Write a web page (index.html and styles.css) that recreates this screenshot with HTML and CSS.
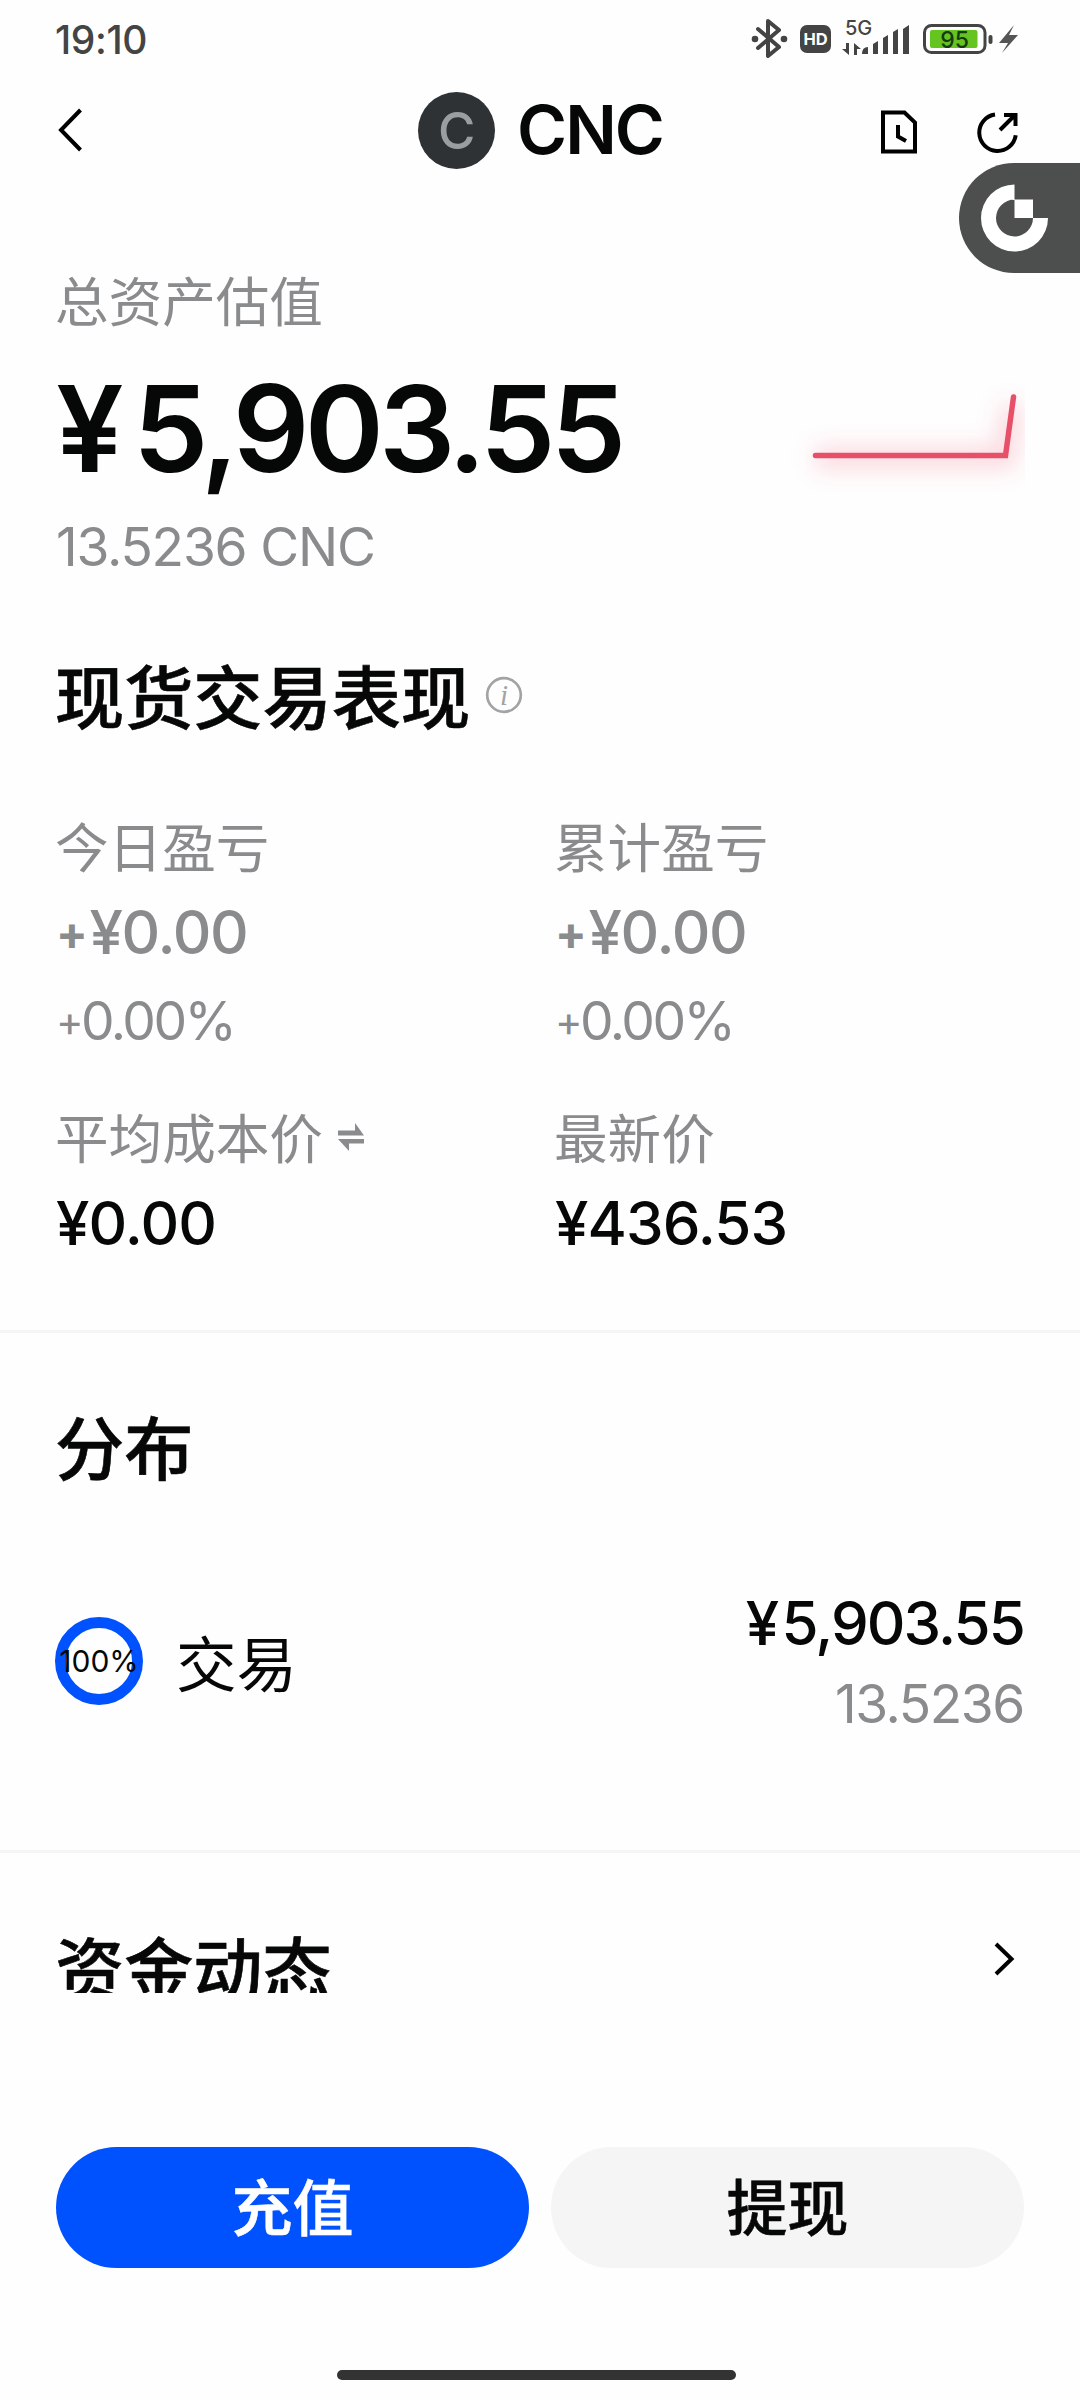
FILE: index.html
```
<!DOCTYPE html>
<html lang="zh-CN">
<head>
<meta charset="utf-8">
<title>CNC</title>
<link rel="stylesheet" href="styles.css">
</head>
<body>
<div class="screen">
  <div class="statusbar">
    <span class="clock">19:10</span>
    <div class="status-icons">
      <svg class="status-svg" viewBox="0 0 270 44" width="270" height="44" fill="none">
        <g stroke="#444" stroke-width="4" stroke-linecap="round" stroke-linejoin="round">
          <path d="M7 14 L28 32 L17 41 V6 L28 15 L7 33"/>
        </g>
        <circle cx="4" cy="24" r="3.3" fill="#444"/><circle cx="33" cy="24" r="3.3" fill="#444"/>
        <rect x="49" y="10" width="31" height="28" rx="7" fill="#444"/>
        <text class="hd" x="64.500" y="30" text-anchor="middle">HD</text>
        <text class="net" x="94" y="20">5G</text>
        <g fill="#444">
          <path d="M98 28h-3v6h-4l7 6zM103 40V28l7 6h-4v6z"/>
          <path d="M111 39q0-7 6-7v7zM122 29l5-3v13h-5zM132 23l5-3v19h-5zM142 17l5-3v25h-5zM152 14l6-4v29h-6z"/>
        </g>
        <rect x="173.500" y="10.500" width="60.500" height="27" rx="7" stroke="#444" stroke-width="3"/>
        <rect x="179" y="15" width="47.500" height="18" rx="2" fill="#66c421"/>
        <text class="bat" x="203.500" y="32.500" text-anchor="middle">95</text>
        <rect x="237.500" y="20" width="4" height="9" rx="2" fill="#444"/>
        <path d="M263 10l-15 18h9l-6 10 16-18h-9z" fill="#555"/>
      </svg>
    </div>
  </div>

  <header class="header">
    <svg class="back" viewBox="0 0 26 44" width="26" height="44" fill="none" stroke="#000" stroke-width="4"><path d="M23.500 2 4 22l19.500 20"/></svg>
    <div class="coin"><span class="coin-logo">C</span><h1 class="coin-name">CNC</h1></div>
    <div class="actions">
      <svg viewBox="0 0 36 44" width="36" height="44" fill="none" stroke="#000" stroke-width="4"><path d="M2 2.500H23.500L34 12.500V41.500H2z"/><path d="M17 15v11.500l8 4.500"/></svg>
      <svg viewBox="0 0 42 44" width="42" height="44" fill="none" stroke="#000" stroke-width="4"><path d="M18 4.500a18.300 18.300 0 1 0 20.700 20.700"/><path d="M23 20 37.500 5.500M27 5h11.500v11"/></svg>
    </div>
  </header>

  <div class="float-tab">
    <svg viewBox="0 0 68 68" width="68" height="68" fill="#fff"><path d="M33.500 0.500A33.500 33.500 0 1 0 67 34H52A18.500 18.500 0 1 1 33.500 15.500zM33.500 15.500H52V34H33.500z"/></svg>
  </div>

  <main class="content">
    <section class="asset">
      <div class="asset-text">
        <p class="label">总资产估值</p>
        <p class="total"><span class="yen">¥</span>5,903.55</p>
        <p class="holding">13.5236 CNC</p>
      </div>
      <svg class="spark" viewBox="0 0 245 130" width="245" height="130" fill="none">
        <defs><filter id="glow" x="-30" y="-30" width="300" height="190" filterUnits="userSpaceOnUse"><feGaussianBlur stdDeviation="11"/></filter></defs>
        <path d="M35 78H225L233 25" stroke="#f0506c" stroke-opacity=".22" stroke-width="22" filter="url(#glow)"/>
        <path d="M35.500 75.500H225.500L233.500 17" stroke="#e84f68" stroke-width="5.500" stroke-linecap="round"/>
      </svg>
    </section>

    <section class="performance">
      <div class="title-row">
        <h2 class="title">现货交易表现</h2>
        <svg class="info" viewBox="0 0 38 38" width="38" height="38" fill="none"><circle cx="19" cy="19" r="16.800" stroke="#a1a3a5" stroke-width="2.700"/><text class="info-i" x="19" y="28.500" text-anchor="middle">i</text></svg>
      </div>
      <div class="stats">
        <div class="stat"><p class="label">今日盈亏</p><p class="value signed"><span class="plus">+</span>¥0.00</p><p class="pct"><span class="plus">+</span>0.00%</p></div>
        <div class="stat"><p class="label">累计盈亏</p><p class="value signed"><span class="plus">+</span>¥0.00</p><p class="pct"><span class="plus">+</span>0.00%</p></div>
        <div class="stat"><p class="label">平均成本价<svg class="swap" viewBox="0 0 26 28" width="26" height="28" fill="#898b8d"><path d="M0 7.500h17V0l9 12.500H0zM26 20.500H11V28L0 16h26z"/></svg></p><p class="value">¥0.00</p></div>
        <div class="stat"><p class="label">最新价</p><p class="value">¥436.53</p></div>
      </div>
    </section>

    <section class="distribution">
      <h2 class="title">分布</h2>
      <div class="dist-row">
        <div class="ring"><span>100%</span></div>
        <span class="dist-name">交易</span>
        <div class="dist-amount"><p class="value"><span class="yen">¥</span>5,903.55</p><p class="sub">13.5236</p></div>
      </div>
    </section>

    <section class="activity">
      <h2 class="title">资金动态</h2>
      <svg class="more" viewBox="0 0 22 36" width="22" height="36" fill="none" stroke="#000" stroke-width="4"><path d="M2 3l15.500 15L2 33"/></svg>
    </section>
  </main>

  <footer class="footer">
    <button class="btn primary">充值</button>
    <button class="btn secondary">提现</button>
  </footer>
  <div class="home-bar"></div>
</div>
</body>
</html>
```
FILE: styles.css
```
* { box-sizing: border-box; }
body, h1, h2, p { margin: 0; }
body {
  width: 1080px;
  height: 2400px;
  overflow: hidden;
  background: #fefefe;
  color: #060807;
  font-family: Inter, "Noto Sans CJK SC", sans-serif;
}
.screen {
  position: relative;
  display: flex;
  flex-direction: column;
  height: 2400px;
}
.statusbar {
  display: flex;
  justify-content: space-between;
  height: 78px;
  padding: 15px 56px 0 55px;
}
.clock {
  font-size: 39px;
  line-height: 50px;
  font-weight: 500;
  letter-spacing: -0.400px;
  color: #444;
}
.status-icons { width: 273px; }
.status-svg { display: block; }
.hd { font: 700 16.500px Inter, sans-serif; fill: #fff; }
.net { font: 500 20px Inter, sans-serif; fill: #444; }
.bat { font: 500 23px Inter, sans-serif; fill: #173a10; }
.header {
  display: grid;
  grid-template-columns: 1fr auto 1fr;
  align-items: center;
  height: 104px;
  padding: 0 61px 0 62px;
}
.back { margin-left: -5px; }
.coin { display: flex; align-items: center; gap: 22px; }
.coin-logo {
  width: 77px;
  height: 77px;
  border-radius: 50%;
  background: #2f3235;
  color: #9b9ea1;
  font-size: 51px;
  line-height: 77px;
  font-weight: 500;
  text-align: center;
}
.coin-name {
  font-size: 68px;
  line-height: 78px;
  padding-bottom: 2px;
  font-weight: 600;
  letter-spacing: -2px;
}
.actions { display: flex; justify-content: flex-end; gap: 60px; padding-top: 3px; }
.float-tab {
  position: absolute;
  top: 163px;
  right: 0;
  width: 121px;
  height: 110px;
  padding: 21px 0 0 22px;
  border-radius: 55px 0 0 55px;
  background: #4d4f4e;
}
.content {
  height: 1811px;
  overflow: hidden;
}
.asset {
  display: flex;
  justify-content: space-between;
  padding: 85px 56px 0;
}
.label {
  display: flex;
  align-items: center;
  margin-left: -1px;
  padding-top: 1px;
  font-size: 53.600px;
  line-height: 69px;
  color: #898b8d;
}
.total {
  margin-top: 22px;
  font-size: 120px;
  line-height: 140px;
  font-weight: 600;
  letter-spacing: -4.900px;
}
.yen { margin-right: 0.120em; }
.holding {
  margin-top: 13px;
  font-size: 53.300px;
  line-height: 70px;
  letter-spacing: -1.200px;
  color: #898b8d;
}
.spark { margin: 113px -1px 0 0; }
.performance { padding: 72px 56px 0; border-bottom: 3px solid #f5f5f5; height: 751px; }
.title {
  margin-left: -1px;
  padding-top: 1px;
  font-size: 69.200px;
  line-height: 89px;
  font-weight: 500;
  -webkit-text-stroke: 0.600px #060807;
}
.title-row { display: flex; align-items: center; gap: 15px; }
.info { margin-bottom: 9px; }
.info-i { font: italic 29px "Liberation Serif", serif; fill: #a1a3a5; }
.stats { display: grid; grid-template-columns: 499px 1fr; margin-top: 69px; row-gap: 48px; }
.value {
  margin-top: 9px;
  font-size: 60px;
  line-height: 80px;
  font-weight: 500;
  letter-spacing: -0.900px;
}
.signed { letter-spacing: -1.300px; color: #898b8d; }
.plus { font-size: 0.780em; line-height: 0; vertical-align: 0.090em; }
.signed .plus { margin-right: 3px; font-weight: 700; }
.pct {
  margin-top: 14px;
  font-size: 53.300px;
  line-height: 70px;
  letter-spacing: -2.500px;
  color: #898b8d;
}
.swap { margin: 0 0 6px 15px; }
.distribution { padding: 72px 56px 0; height: 520px; border-bottom: 3px solid #f5f5f5; }
.dist-row { display: flex; align-items: center; margin-top: 88px; }
.ring {
  display: flex;
  align-items: center;
  justify-content: center;
  width: 88px;
  height: 88px;
  margin-left: -1px;
  border: 11px solid #0052ff;
  border-radius: 50%;
  font-size: 30px;
  white-space: nowrap;
}
.dist-name { padding-top: 7px; margin-left: 33px; font-size: 60.500px; line-height: 80px; }
.dist-amount { margin-left: auto; text-align: right; }
.dist-amount .value { margin: 0; letter-spacing: -1.900px; }
.dist-amount .yen { margin-right: 0.070em; }
.sub {
  margin-top: 6px;
  font-size: 53.300px;
  line-height: 70px;
  letter-spacing: -1.400px;
  color: #898b8d;
}
.activity { display: flex; justify-content: space-between; padding: 73px 64px 0 56px; }
.more { margin-top: 15px; }
.footer { display: flex; gap: 22px; padding: 154px 56px 0; }
.btn {
  flex: 1;
  height: 121px;
  padding: 3px 0 0;
  border: 0;
  border-radius: 61px;
  font: 500 61px/118px Inter, "Noto Sans CJK SC", sans-serif;
  -webkit-text-stroke: 0.500px currentColor;
}
.primary { background: #0052ff; color: #fff; }
.secondary { background: #f5f5f5; color: #060807; }
.home-bar { width: 399px; height: 10px; margin: 102px 0 0 337px; border-radius: 5px; background: #333; }
```
